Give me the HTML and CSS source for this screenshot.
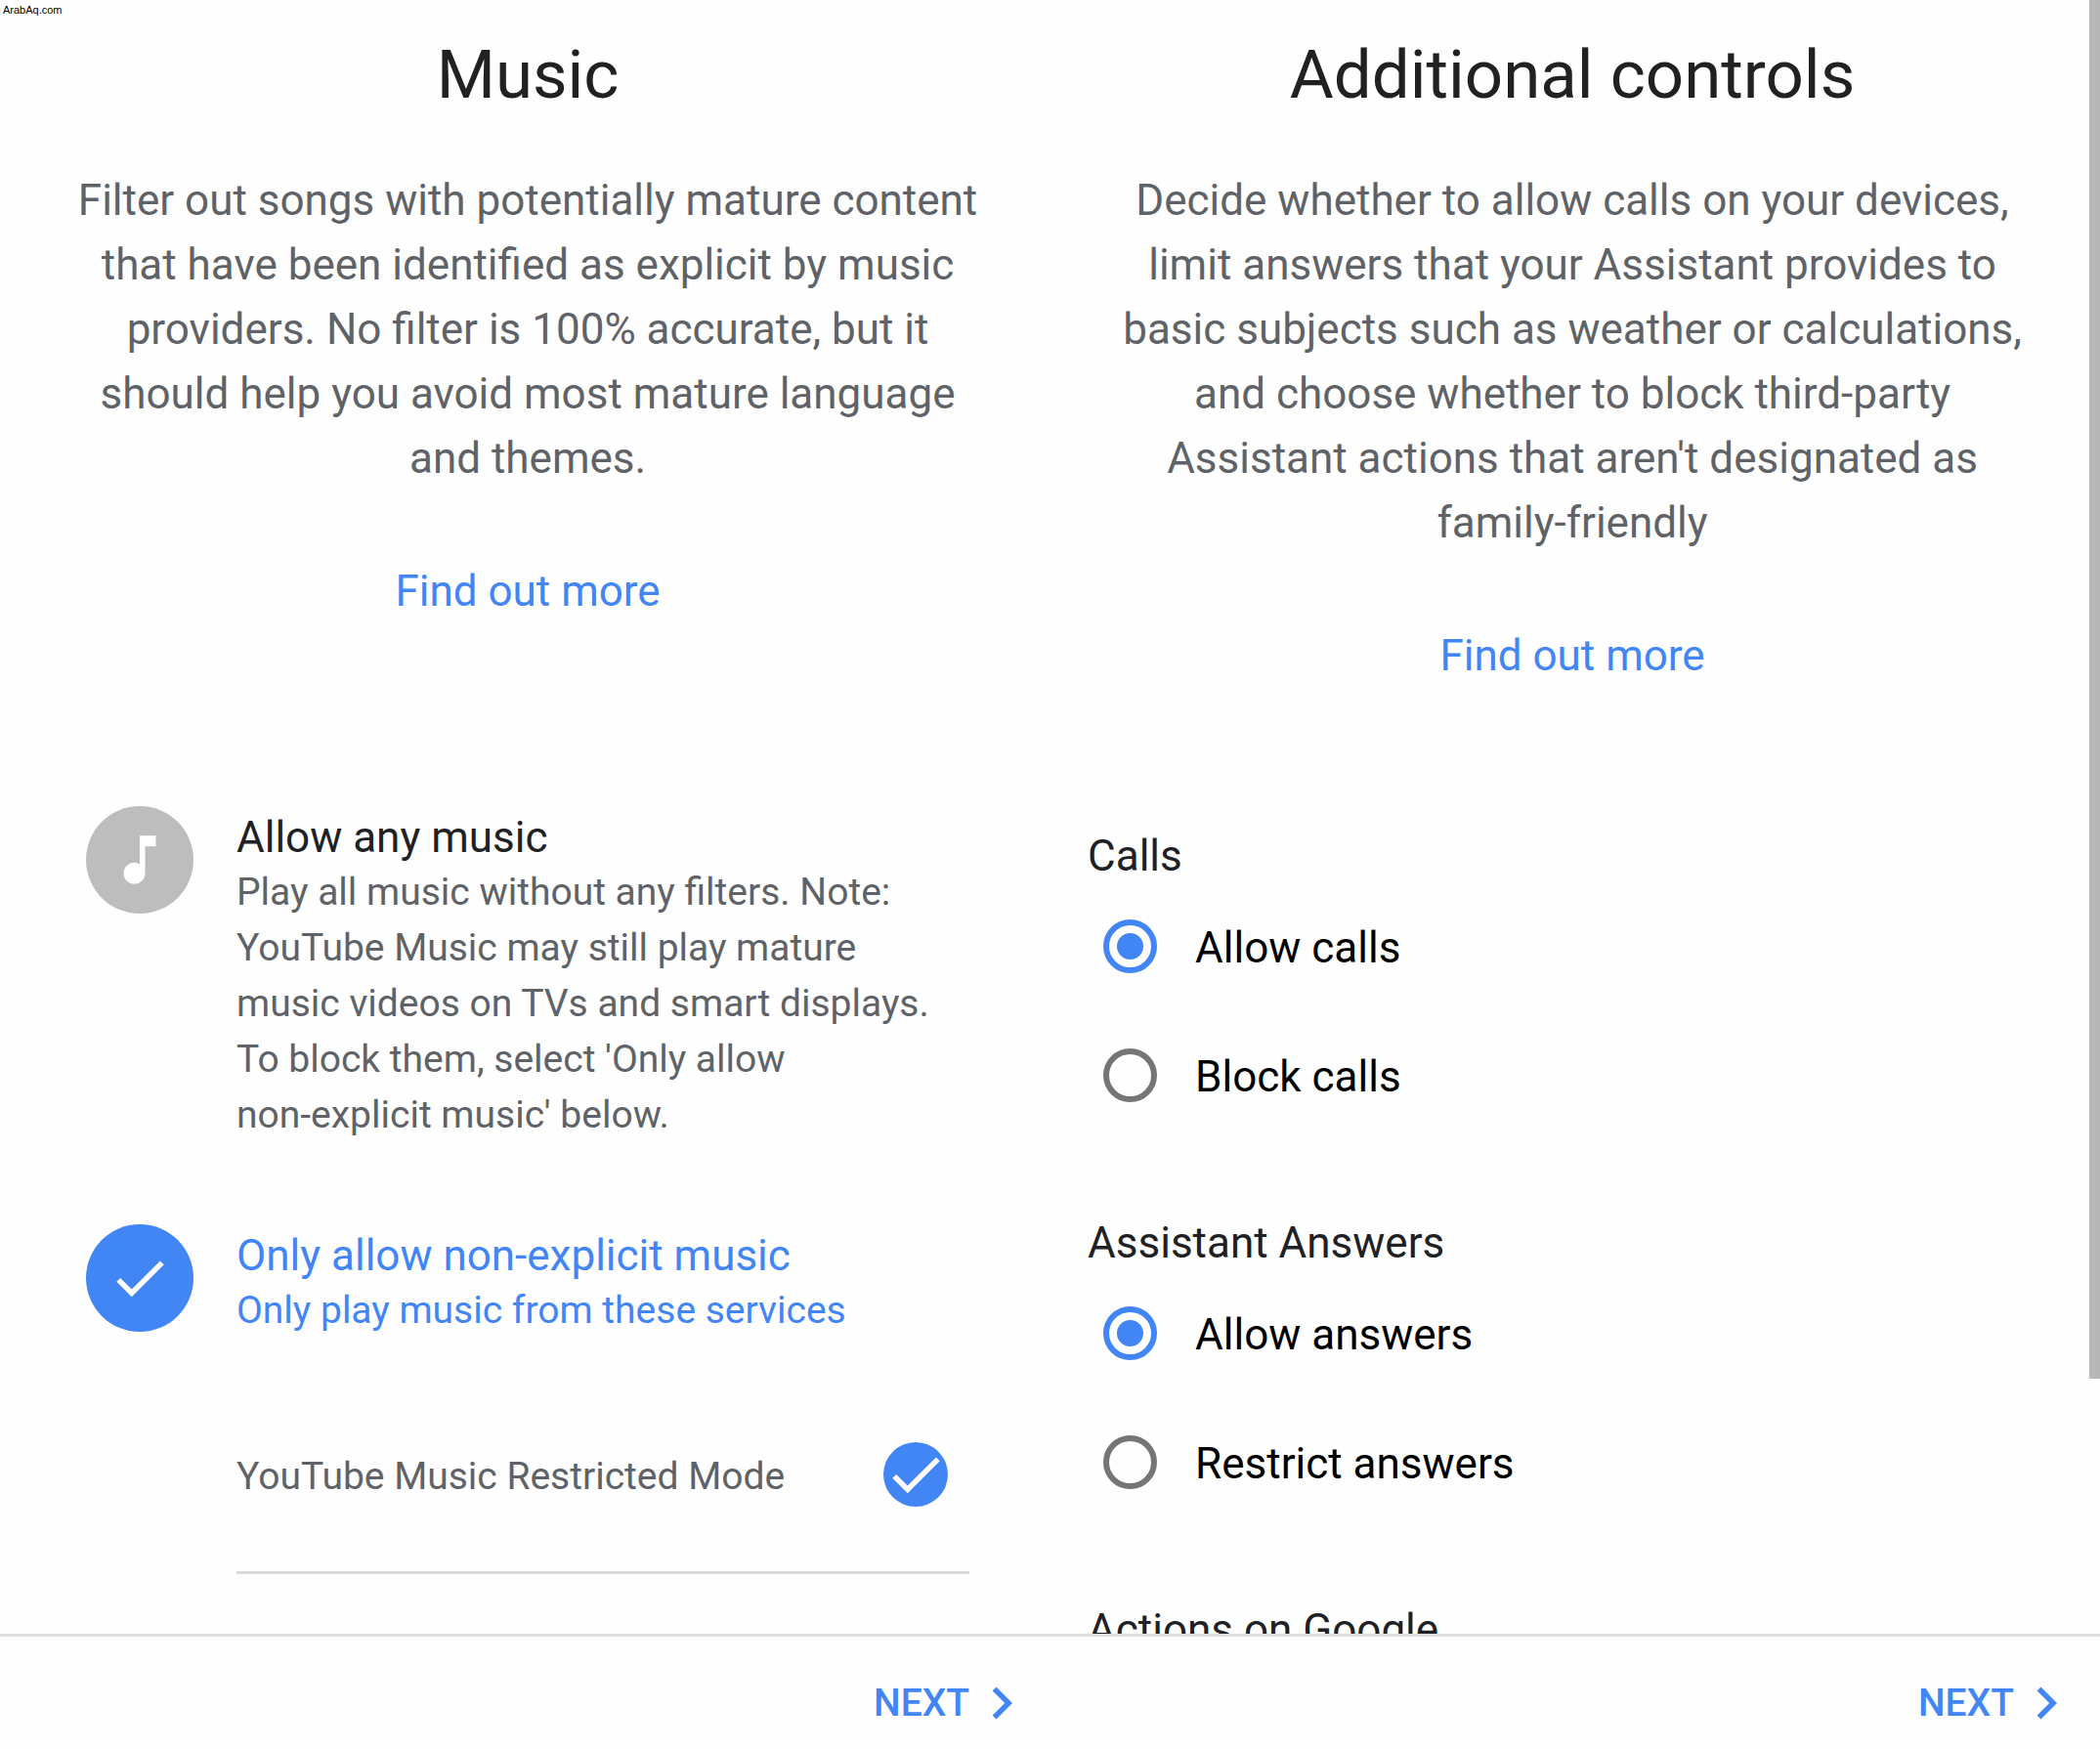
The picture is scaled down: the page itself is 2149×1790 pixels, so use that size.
FILE: index.html
```
<!DOCTYPE html>
<html lang="en">
<head>
    <meta charset="UTF-8">
    <meta name="viewport" content="width=device-width, initial-scale=1.0">
    <title>Digital Wellbeing filters</title>
    <link rel="stylesheet" href="styles.css">
</head>
<body>
    <span class="watermark">ArabAq.com</span>

    <!-- Music -->
    <section class="panel panel-music">
        <div class="content">
            <div class="intro">
                <h1>Music</h1>
                <p>Filter out songs with potentially mature content that have been identified as explicit by music providers. No filter is 100% accurate, but it should help you avoid most mature language and themes.</p>
                <a href="#">Find out more</a>
            </div>
            <div class="options">
                <label class="option">
                    <span class="option-icon">
                        <input type="radio" name="music">
                        <svg viewBox="0 0 24 24"><path d="M12 3v10.55c-.59-.34-1.27-.55-2-.55-2.21 0-4 1.79-4 4s1.79 4 4 4 4-1.79 4-4V7h4V3h-6z"/></svg>
                    </span>
                    <span class="option-text">
                        <span class="option-title">Allow any music</span>
                        <span class="option-note">Play all music without any filters. Note: YouTube Music may still play mature music videos on TVs and smart displays. To block them, select 'Only allow <span class="nowrap">non-explicit</span> music' below.</span>
                    </span>
                </label>
                <label class="option">
                    <span class="option-icon">
                        <input type="radio" name="music" checked>
                        <svg viewBox="0 0 24 24"><path d="M9 16.2L4.8 12l-1.4 1.4L9 19 21 7l-1.4-1.4L9 16.2z"/></svg>
                    </span>
                    <span class="option-text">
                        <span class="option-title">Only allow non-explicit music</span>
                        <span class="option-note">Only play music from these services</span>
                    </span>
                </label>
                <label class="service">
                    <span class="service-name">YouTube Music Restricted Mode</span>
                    <span class="service-check">
                        <input type="checkbox" checked>
                        <svg viewBox="0 0 24 24"><path d="M9 16.2L4.8 12l-1.4 1.4L9 19 21 7l-1.4-1.4L9 16.2z"/></svg>
                    </span>
                </label>
            </div>
        </div>
        <footer>
            <button class="next">NEXT<svg viewBox="0 0 24 24"><path d="M10 6L8.59 7.41 13.17 12l-4.58 4.59L10 18l6-6z"/></svg></button>
        </footer>
    </section>

    <!-- Additional controls -->
    <section class="panel panel-controls">
        <div class="content">
            <div class="intro">
                <h1>Additional controls</h1>
                <p>Decide whether to allow calls on your devices, limit answers that your Assistant provides to basic subjects such as weather or calculations, and choose whether to block third-party Assistant actions that aren't designated as family-friendly</p>
                <a href="#">Find out more</a>
            </div>
            <div class="groups">
                <fieldset>
                    <legend>Calls</legend>
                    <label class="choice"><input type="radio" name="calls" checked><span>Allow calls</span></label>
                    <label class="choice"><input type="radio" name="calls"><span>Block calls</span></label>
                </fieldset>
                <fieldset>
                    <legend>Assistant Answers</legend>
                    <label class="choice"><input type="radio" name="answers" checked><span>Allow answers</span></label>
                    <label class="choice"><input type="radio" name="answers"><span>Restrict answers</span></label>
                </fieldset>
                <fieldset>
                    <legend>Actions on Google</legend>
                </fieldset>
            </div>
        </div>
        <div class="scrollbar"></div>
        <footer>
            <button class="next">NEXT<svg viewBox="0 0 24 24"><path d="M10 6L8.59 7.41 13.17 12l-4.58 4.59L10 18l6-6z"/></svg></button>
        </footer>
    </section>
</body>
</html>
```
FILE: styles.css
```
* {
    box-sizing: border-box;
}
body {
    margin: 0;
    height: 100vh;
    display: grid;
    grid-template-columns: 99fr 100fr;
    background-color: #fefefe;
    color: #202124;
    font-family: Roboto, sans-serif;
    font-size: 44px;
    line-height: 66px;
}
.watermark {
    position: absolute;
    top: 2px;
    left: 3px;
    color: #000;
    font-family: "Liberation Sans", Arial, sans-serif;
    font-size: 11px;
    line-height: 16px;
}
.panel {
    position: relative;
    display: flex;
    flex-direction: column;
    height: 100vh;
    min-width: 0;
}
.content {
    flex: 1;
    min-height: 0;
    overflow: hidden;
}
.intro {
    padding: 32px 66px 0;
    text-align: center;
    color: #5f6368;
}
.panel-music .intro {
    padding-right: 55px;
}
h1 {
    margin: 0 0 50px;
    color: #212121;
    font-size: 69px;
    font-weight: 400;
    line-height: 90px;
}
.intro p {
    margin: 0 0 70px;
}
.intro a {
    display: inline-block;
    color: #4285f4;
    text-decoration: none;
}
input {
    appearance: none;
    margin: 0;
    border-radius: 50%;
    cursor: pointer;
}

/* music options */
.options {
    margin-top: 187px;
    padding: 0 77px 0 88px;
}
.option {
    display: flex;
    gap: 44px;
    margin-bottom: 83px;
}
.option-icon, .service-check {
    flex: none;
    display: grid;
    place-items: center;
}
.option-icon {
    width: 110px;
    height: 110px;
}
.option-icon > *, .service-check > * {
    grid-area: 1 / 1;
}
.option-icon input {
    width: 110px;
    height: 110px;
    background-color: #bdbdbd;
}
.option-icon input:checked {
    background-color: #4285f4;
}
svg {
    width: 66px;
    height: 66px;
    fill: #fff;
    pointer-events: none;
}
.option-text {
    padding: 5px 28px 0 0;
}
.option-title, .option-note {
    display: block;
}
.option-title {
    line-height: 55px;
}
.option-note {
    color: #5f6368;
    font-size: 39px;
    line-height: 57px;
}
.option:has(:checked) .option-title,
.option:has(:checked) .option-note {
    color: #4285f4;
}
.nowrap {
    white-space: nowrap;
}
.service {
    display: flex;
    align-items: center;
    justify-content: space-between;
    margin: 106px 0 0 154px;
    padding: 0 22px 66px 0;
    border-bottom: 3px solid #dadada;
    color: #5f6368;
    font-size: 39px;
}
.service-name {
    padding-top: 4px;
    line-height: 62px;
}
.service-check input {
    width: 66px;
    height: 66px;
    background-color: #bdbdbd;
}
.service-check input:checked {
    background-color: #4285f4;
}

/* additional controls */
.groups {
    margin-top: 139px;
    padding: 0 44px;
}
fieldset {
    margin: 0 0 106px;
    padding: 0;
    border: 0;
}
legend {
    padding: 0 0 26px;
}
.choice {
    display: flex;
    align-items: center;
    gap: 39px;
    height: 66px;
    padding-left: 16px;
    color: #000;
}
.choice + .choice {
    margin-top: 66px;
}
.choice input {
    width: 55px;
    height: 55px;
    border: 6px solid #757575;
}
.choice input:checked {
    border-color: #4285f4;
    background: radial-gradient(circle, #4285f4 13px, transparent 14px);
}
.choice span {
    padding-top: 4px;
}
.scrollbar {
    position: absolute;
    top: 0;
    right: 0;
    width: 11px;
    height: 1411px;
    background-color: #b7b7b7;
}

footer {
    display: flex;
    justify-content: flex-end;
    height: 118px;
    border-top: 3px solid #dfdfdf;
    padding-right: 22px;
}
.panel-music footer {
    padding-right: 11px;
}
.next {
    display: flex;
    align-items: center;
    padding: 20px 0 0;
    border: 0;
    background: none;
    color: #4285f4;
    font-family: inherit;
    font-size: 39px;
    font-weight: 500;
    cursor: pointer;
}
.next svg {
    fill: #4285f4;
}
```
